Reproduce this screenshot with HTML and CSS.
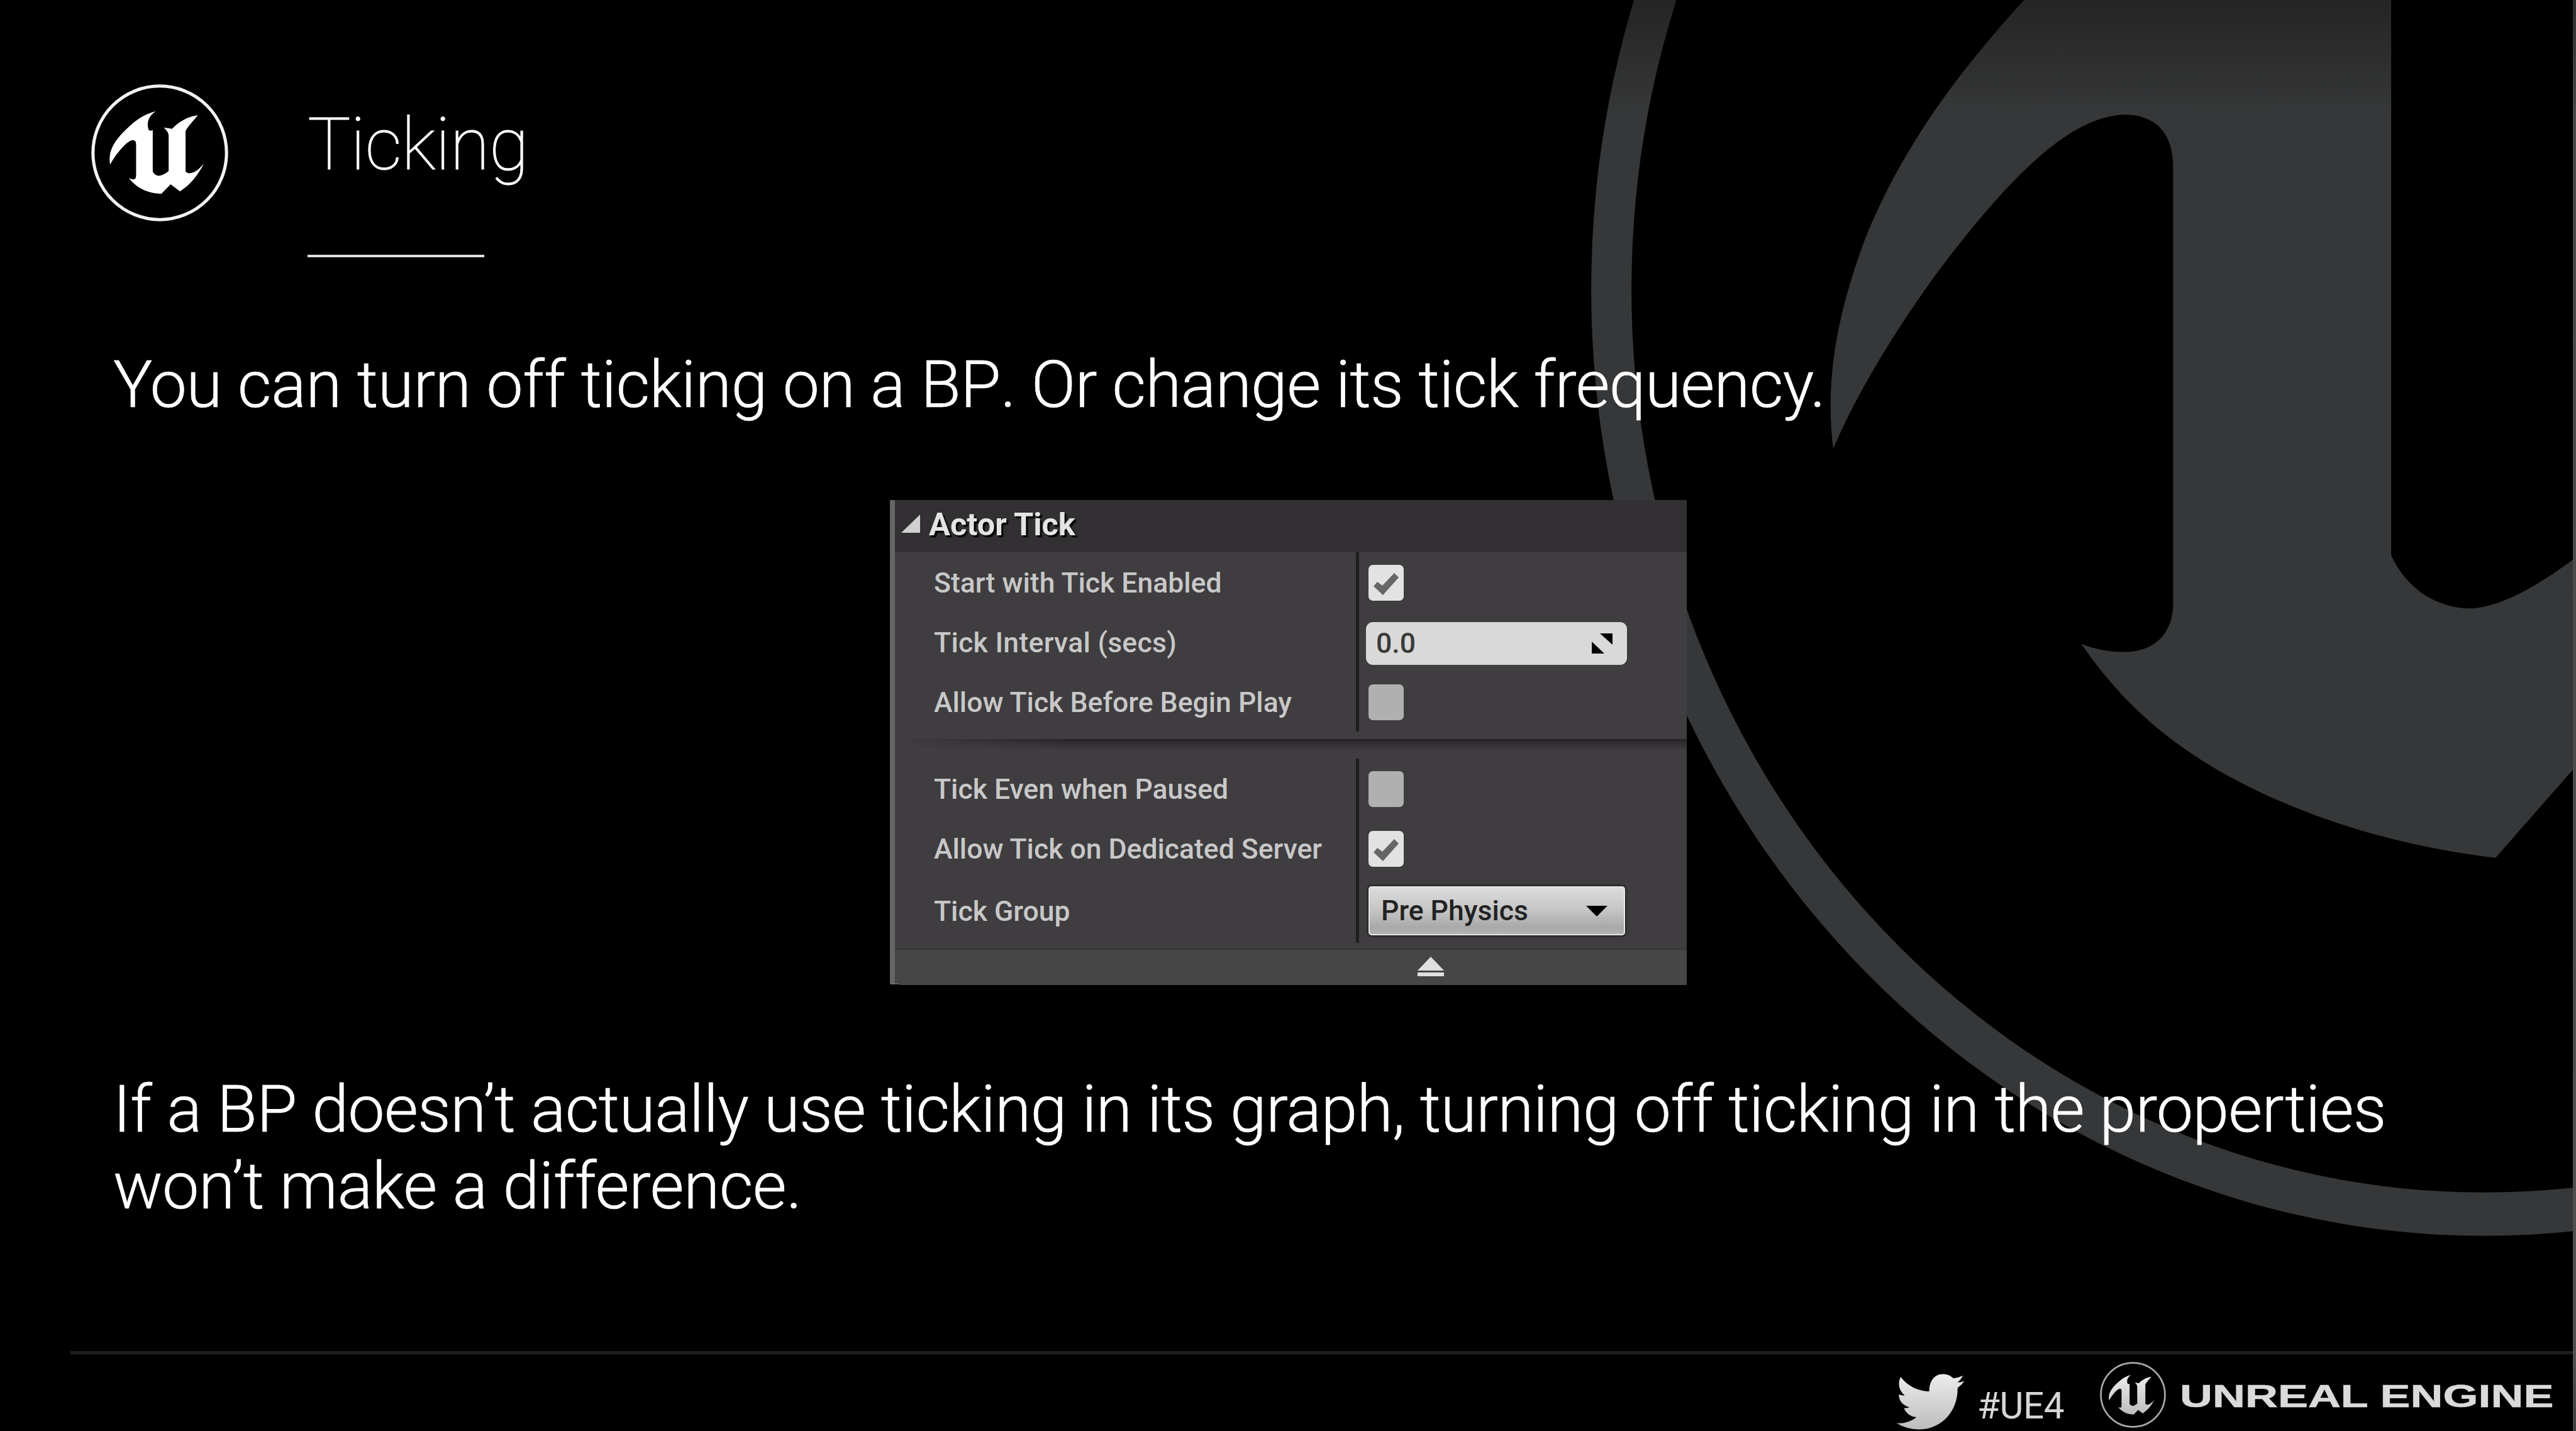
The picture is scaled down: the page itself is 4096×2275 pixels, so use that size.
FILE: index.html
```html
<!DOCTYPE html>
<html lang="en">
<head>
<meta charset="utf-8">
<title>Ticking</title>
<link rel="stylesheet" href="styles.css">
</head>
<body>
<svg class="defs" width="0" height="0">
  <defs>
    <linearGradient id="silver" x1="0" y1="0" x2="0" y2="1">
      <stop offset="0" stop-color="#ececec"/><stop offset="1" stop-color="#bdbdbd"/>
    </linearGradient>
    <linearGradient id="fade" x1="0" y1="0" x2="0" y2="1">
      <stop offset="0" stop-color="#000" stop-opacity=".34"/><stop offset="1" stop-color="#000" stop-opacity="0"/>
    </linearGradient>
    <path id="u-mark" d="M618 272C520 298 455 348 395 405C330 465 262 545 256 630Q252 665 260 690C280 650 310 608 345 568C375 535 408 502 436 499Q462 499 463 530V778Q462 808 440 808Q424 806 406 797C460 868 545 918 662 921L735 846L808 902C890 850 945 780 998 682C960 725 925 758 882 760Q865 760 852 746V428C875 385 915 345 950 304C870 312 800 355 746 410L680 400Q712 425 719 458V742Q670 780 638 779Q612 777 594 746V420Q575 430 562 418C545 370 555 315 618 272Z"/>
  </defs>
</svg>
<main class="slide">
  <svg class="backdrop" viewBox="0 0 6720 3732" preserveAspectRatio="none">
    <g fill="#363738">
      <path fill-rule="evenodd" d="M4151 755a2329 2468 0 1 0 4658 0a2329 2468 0 1 0 -4658 0ZM4256 755a2224 2355 0 1 0 4448 0a2224 2355 0 1 0 -4448 0Z"/>
      <path transform="scale(1.7347 2.1046) translate(2305.9 0)" d="M738 0C610 115 540 210 497 300C462 380 447 440 447 505Q447 530 451 556C480 500 530 425 610 335C720 215 810 143 890 142C935 142 962 165 962 205V752C960 785 935 808 887 808Q855 808 824 798Q880 865 950 910C1060 982 1240 1043 1447 1063L1580 938V683C1510 728 1450 754 1405 754C1355 752 1312 728 1290 688V0Z"/>
    </g>
    <rect x="4000" width="2720" height="300" fill="url(#fade)"/>
  </svg>

  <header class="head">
    <svg class="head-logo" viewBox="110 60 1078 1078">
      <circle cx="649" cy="599" r="525" fill="none" stroke="#f2f2f2" stroke-width="25"/>
      <use href="#u-mark" fill="#fff"/>
    </svg>
    <div class="head-text">
      <h1 class="title">Ticking</h1>
      <div class="title-rule"></div>
    </div>
  </header>

  <p class="copy copy-first">You can turn off ticking on a B<span class="unkerned">P.</span><span class="tight"> Or change its tick frequency.</span></p>

  <section class="panel">
    <div class="panel-head">
      <svg class="tri" viewBox="0 0 30 29"><path d="M30 0V29H0Z" fill="#d0d0d0"/></svg>
      <span>Actor Tick</span>
    </div>
    <div class="group">
      <div class="row"><div class="name">Start with Tick Enabled</div><div class="value"><span class="check on"><svg viewBox="0 0 56 57"><path d="M8 34L14 27L22 33L41 13L48 20L23 48Z"/></svg></span></div></div>
      <div class="row"><div class="name name-wide">Tick Interval (secs)</div><div class="value"><span class="field">0.0<svg class="spin" viewBox="0 0 33 32"><path d="M13 0H33V18ZM0 13V32H20Z"/></svg></span></div></div>
      <div class="row"><div class="name">Allow Tick Before Begin Play</div><div class="value"><span class="check"></span></div></div>
    </div>
    <div class="divider"></div>
    <div class="group">
      <div class="row"><div class="name">Tick Even when Paused</div><div class="value"><span class="check"></span></div></div>
      <div class="row"><div class="name">Allow Tick on Dedicated Server</div><div class="value"><span class="check on"><svg viewBox="0 0 56 57"><path d="M8 34L14 27L22 33L41 13L48 20L23 48Z"/></svg></span></div></div>
      <div class="row row-tall"><div class="name">Tick Group</div><div class="value"><span class="combo">Pre Physics<svg class="caret" viewBox="0 0 34 17"><path d="M0 0H34L17 17Z"/></svg></span></div></div>
    </div>
    <div class="panel-foot">
      <svg class="eject" viewBox="0 0 42 31"><path d="M21 0L42 22H0ZM0 25H42V31H0Z"/></svg>
    </div>
  </section>

  <p class="copy copy-second">If a BP doesn’t actually use ticking in its graph, turning off ticking in the properties<br><span class="last-line">won’t make a difference.</span></p>

  <footer class="foot">
    <svg class="bird" viewBox="78 128 534 437"><path fill="url(#silver)" d="M112 152C165 220 245 264 336 266C335 185 375 130 445 130Q492 130 524 164Q562 160 598 143Q585 172 556 196Q585 195 610 186Q590 215 557 238C562 400 450 563 250 563Q160 562 80 514Q170 520 236 468Q165 460 138 396Q160 398 182 390Q100 365 98 290Q120 298 144 298Q75 235 112 152Z"/></svg>
    <span class="tag">#UE4</span>
    <svg class="foot-logo" viewBox="110 60 1078 1078">
      <circle cx="649" cy="599" r="523" fill="none" stroke="#a8a8a8" stroke-width="28"/>
      <use href="#u-mark" fill="url(#silver)"/>
    </svg>
    <span class="wordmark">UNREAL ENGINE</span>
  </footer>
  <div class="edge"></div>
</main>
</body>
</html>
```
FILE: styles.css
```css
* { box-sizing: border-box; }

body {
  margin: 0;
  background: #000;
  color: #fff;
  font-family: Roboto, "Liberation Sans", sans-serif;
}

svg { display: block; }

.defs { position: absolute; }

.slide {
  position: relative;
  display: flex;
  flex-direction: column;
  width: 4096px;
  height: 2275px;
  overflow: hidden;
  background: #000;
}

/* Oversized brand mark bleeding off the right side */
.backdrop {
  position: absolute;
  inset: 0;
  width: 4096px;
  height: 2275px;
}

.head, .copy, .panel, .foot { position: relative; }

.head {
  display: flex;
  flex: none;
  height: 550px;
  padding: 134px 0 0 145px;
}

.head-logo { width: 218px; height: 218px; }

.head-text { margin: 28px 0 0 126px; }

.title {
  margin: 0;
  font-size: 115px;
  line-height: 135px;
  font-weight: 100;
  letter-spacing: -0.5px;
  white-space: nowrap;
  -webkit-text-stroke: 1px #fff;
}

.title-rule {
  width: 281px;
  height: 4px;
  margin-top: 108px;
  background: #e0e0e0;
}

.copy {
  flex: none;
  margin: 0;
  padding-left: 180px;
  font-size: 104.3px;
  line-height: 122px;
  font-weight: 300;
  white-space: nowrap;
  -webkit-text-stroke: 0.6px #fff;
}

.copy-first { height: 245px; letter-spacing: -0.64px; }

.unkerned { font-kerning: none; }

.tight { letter-spacing: -0.87px; }

.panel {
  flex: none;
  width: 1267px;
  height: 770px;
  margin-left: 1415px;
  border-left: 8px solid #666566;
  border-bottom: 2px solid #6a6a6a;
  background: #3f3d3f;
  color: #c8c8c8;
  font-size: 44.5px;
  font-weight: 500;
}

.panel-head {
  display: flex;
  align-items: center;
  gap: 14px;
  height: 83px;
  padding: 0 0 7px 10px;
  background: #323032;
  color: #e4e4e4;
  font-size: 50.5px;
  font-weight: 700;
  text-shadow: 3px 3px 2px #000;
}

.tri { width: 30px; height: 29px; margin-top: -2px; }

.row {
  display: grid;
  grid-template-columns: 733px 1fr;
  height: 95px;
}

.row-tall { height: 103px; }

.name {
  display: flex;
  align-items: center;
  padding: 2px 0 0 62px;
  white-space: nowrap;
}

.name-wide { letter-spacing: 0.3px; }

.value {
  display: flex;
  align-items: center;
  padding: 1px 0 0 15px;
  border-left: 5px solid #1f1e1f;
}

.check {
  width: 56px;
  height: 57px;
  border-radius: 7px;
  background: #b0b0b0;
}

.check.on { background: #e2e2e2; }
.check path { fill: #666; }

.field {
  display: flex;
  align-items: center;
  justify-content: space-between;
  width: 415px;
  height: 68px;
  margin: 3px 0 0 -4px;
  padding: 0 23px 0 16px;
  border-radius: 11px;
  background: #d9d9d9;
  color: #3a3a3a;
}

.spin { width: 33px; height: 32px; }

.combo {
  display: flex;
  align-items: center;
  justify-content: space-between;
  width: 408px;
  height: 78px;
  padding: 0 26px 0 18px;
  border: 2px solid #e6e6e6;
  border-radius: 5px;
  background: linear-gradient(#dcdcdc, #c4c4c4 50%, #a9a9a9 85%, #b2b2b2);
  box-shadow: 0 0 3px 2px #252425;
  color: #222;
}

.caret { width: 34px; height: 17px; }

.divider {
  height: 43px;
  padding-top: 12px;
}

.divider::before {
  content: "";
  display: block;
  height: 18px;
  background: linear-gradient(to right, #3f3d3f, transparent 22%), linear-gradient(#232123, #2f2d2f 30%, #3f3d3f);
}

.panel-foot {
  height: 58px;
  margin-top: 9px;
  padding: 11px 0 0 831px;
  border-top: 2px solid #363536;
  border-bottom-left-radius: 10px;
  background: #464646;
}

.eject { width: 42px; height: 31px; fill: #e0e0e0; }

.copy-second { height: 583px; padding-top: 137px; letter-spacing: -0.82px; }

.last-line { letter-spacing: -0.58px; }

.foot {
  display: flex;
  flex: none;
  height: 127px;
  margin-left: 112px;
  border-top: 5px solid #1f1e1f;
}

.bird { width: 109px; height: 89px; margin: 31px 0 0 2903px; }

.tag {
  flex: none;
  margin: 48px 0 0 20px;
  width: 142px;
  font-size: 58.5px;
  line-height: 68px;
  letter-spacing: -0.5px;
  color: #d6d6d6;
  white-space: nowrap;
}

.foot-logo { flex: none; width: 105px; height: 105px; margin: 12px 0 0 53px; }

.wordmark {
  margin: 38px 0 0 22px;
  font-family: "Liberation Sans", Arial, sans-serif;
  font-size: 50.5px;
  line-height: 58px;
  font-weight: 700;
  color: #dadada;
  white-space: nowrap;
  transform: scaleX(1.425);
  transform-origin: 0 0;
  -webkit-text-stroke: 0.6px #dadada;
}

/* Thin strip left by the neighbouring window */
.edge {
  position: absolute;
  top: 0;
  right: 0;
  width: 5px;
  height: 2275px;
  background: linear-gradient(#303030, #484848 8%, #505050 95%, #404040);
}
```
